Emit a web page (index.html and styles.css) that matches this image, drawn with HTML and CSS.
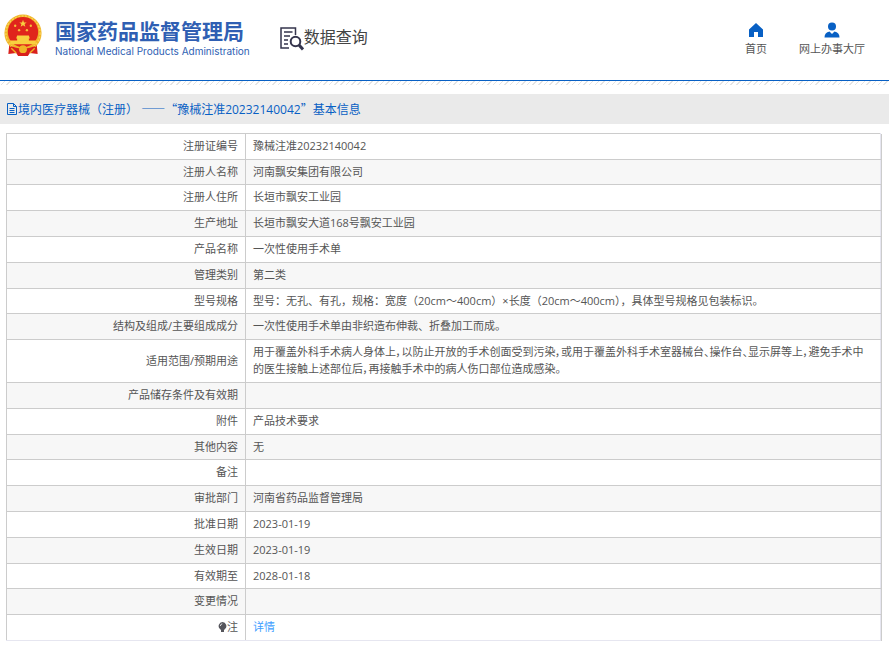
FILE: index.html
```html
<!DOCTYPE html>
<html lang="zh-CN">
<head>
<meta charset="utf-8">
<meta name="viewport" content="width=device-width, initial-scale=1">
<title>国家药品监督管理局 数据查询</title>
<link rel="stylesheet" href="styles.css">
</head>
<body>
<header class="header">
  <div class="brand">
    <svg class="emblem" viewBox="0 0 40 44" aria-hidden="true">
      <path fill="#d9201c" d="M6 31 L34 31 L35 41 L27 40 L25 43 L15 43 L13 40 L5 41Z"/>
      <circle cx="20" cy="19.500" r="19" fill="#f0b428"/>
      <circle cx="20" cy="19.500" r="17.500" fill="none" stroke="#f9d354" stroke-width="1.500" stroke-dasharray="2 1.500"/>
      <circle cx="20" cy="18.500" r="15.500" fill="#e0251c"/>
      <path fill="#f8d040" d="M20 6l1 2.600h2.800l-2.200 1.700.8 2.700-2.400-1.600-2.400 1.600.8-2.700-2.200-1.700H19z"/>
      <g fill="#f5c23a"><circle cx="12" cy="12" r="1.200"/><circle cx="28" cy="12" r="1.200"/><circle cx="16" cy="16.500" r="1.200"/><circle cx="24" cy="16.500" r="1.200"/></g>
      <path fill="#f8d040" d="M14 22h12l1 3h-1v2h7v4H7v-4h7v-2h-1z"/>
      <path fill="#d9201c" d="M8 33q12 5 24 0l1 3q-6 1-7 4H14q-1-3-7-4z"/>
      <circle cx="20" cy="36" r="4" fill="#f0b428"/>
      <path fill="none" stroke="#f0b428" stroke-width="1.500" d="M8 35l5 5M32 35l-5 5"/>
    </svg>
    <div class="brand-text">
      <div class="brand-cn">国家药品监督管理局</div>
      <div class="brand-en">National Medical Products Administration</div>
    </div>
  </div>
  <div class="section-name">
    <svg class="search-doc" viewBox="0 0 24 24" fill="none" stroke="#34344c" aria-hidden="true">
      <path stroke-width="1.500" d="M15.500 8V1H1v20h8"/>
      <path stroke-width="1.500" d="M4 5h8.500M4 9h6M4 13h4M4 17h4"/>
      <circle cx="15.500" cy="14.500" r="4.800" stroke-width="2"/>
      <path stroke-width="3" d="M19 18l4 4.500"/>
    </svg>
    <span>数据查询</span>
  </div>
  <nav class="nav">
    <a href="#home">
      <svg class="nav-icon" viewBox="0 0 16 16" fill="#0860c4" aria-hidden="true"><path d="M8 1l7 6.500V15h-5v-5H6v5H1V7.500z"/></svg>
      <span>首页</span>
    </a>
    <a href="#hall">
      <svg class="nav-icon" viewBox="0 0 16 16" fill="#0860c4" aria-hidden="true"><circle cx="8" cy="4.500" r="4"/><path d="M.5 15.500q0-5 5-6L8 12l2.500-2.500q5 1 5 6z"/></svg>
      <span>网上办事大厅</span>
    </a>
  </nav>
</header>
<div class="hatch"></div>
<main>
  <h1 class="title">
    <svg class="title-icon" viewBox="0 0 12 12" fill="none" stroke="#0860c4" aria-hidden="true"><path d="M1.500.5h6l3 3v8h-9zM7.500.5v3h3M3.500 5.500h5M3.500 7.500h5M3.500 9.500h5"/></svg>
    <span>境内医疗器械（注册） <span class="cjk">——“</span>豫械注准20232140042<span class="cjk">”</span>基本信息</span>
  </h1>
  <table class="info">
    <tbody>
      <tr><th scope="row">注册证编号</th><td>豫械注准20232140042</td></tr>
      <tr><th scope="row">注册人名称</th><td>河南飘安集团有限公司</td></tr>
      <tr><th scope="row">注册人住所</th><td>长垣市飘安工业园</td></tr>
      <tr><th scope="row">生产地址</th><td>长垣市飘安大道168号飘安工业园</td></tr>
      <tr><th scope="row">产品名称</th><td>一次性使用手术单</td></tr>
      <tr><th scope="row">管理类别</th><td>第二类</td></tr>
      <tr><th scope="row">型号规格</th><td>型号：无孔、有孔，规格：宽度（20cm～400cm）×长度（20cm～400cm），具体型号规格见包装标识。</td></tr>
      <tr><th scope="row">结构及组成/主要组成成分</th><td>一次性使用手术单由非织造布伸裁、折叠加工而成。</td></tr>
      <tr><th scope="row">适用范围/预期用途</th><td class="prose">用于覆盖外科手术病人身体上，以防止开放的手术创面受到污染，或用于覆盖外科手术室器械台、操作台、显示屏等上，避免手术中的医生接触上述部位后，再接触手术中的病人伤口部位造成感染。</td></tr>
      <tr><th scope="row">产品储存条件及有效期</th><td></td></tr>
      <tr><th scope="row">附件</th><td>产品技术要求</td></tr>
      <tr><th scope="row">其他内容</th><td>无</td></tr>
      <tr><th scope="row">备注</th><td></td></tr>
      <tr><th scope="row">审批部门</th><td>河南省药品监督管理局</td></tr>
      <tr><th scope="row">批准日期</th><td>2023-01-19</td></tr>
      <tr><th scope="row">生效日期</th><td>2023-01-19</td></tr>
      <tr><th scope="row">有效期至</th><td>2028-01-18</td></tr>
      <tr><th scope="row">变更情况</th><td></td></tr>
      <tr><th scope="row"><svg class="bulb" viewBox="0 0 9 12" aria-hidden="true"><path fill="#55555c" d="M4.500 1a4 4 0 0 1 2.500 7L6 9v2H3V9L2 8a4 4 0 0 1 2.500-7z"/><path fill="none" stroke="#fff" stroke-width=".8" d="M2.300 5q.2-2 2-2.200"/></svg>注</th><td><a class="detail" href="#detail">详情</a></td></tr>
    </tbody>
  </table>
</main>
</body>
</html>
```
FILE: styles.css
```css
* { box-sizing: border-box; }

body {
  margin: 0;
  background: #fff;
  color: #555;
  font: 11px/17px "Open Sans", "Noto Sans CJK SC", sans-serif;
}

.header {
  display: flex;
  align-items: flex-start;
  height: 81px;
  padding: 0 24px 0 3px;
  border-bottom: 1px solid #0860c4;
}

.hatch {
  height: 4px;
  background: repeating-linear-gradient(135deg, #fff 0 3px, #e4e4e4 3px 4px);
}

.brand {
  display: flex;
  align-items: flex-start;
  gap: 12px;
  margin-top: 14px;
}

.emblem { width: 40px; height: 43px; }

.brand-text { color: #2f5fb3; white-space: nowrap; }

.brand-cn {
  margin-top: 4px;
  font-size: 21px;
  line-height: 26px;
  font-weight: 700;
}

.brand-en {
  font: 400 10px/14px Inter, sans-serif;
}

.section-name {
  display: flex;
  align-items: center;
  margin: 23px 0 0 30px;
  font-size: 16px;
  line-height: 26px;
  color: #444;
}

.search-doc { width: 24px; height: 24px; margin-top: 4px; }

.nav {
  display: flex;
  gap: 32px;
  margin: 22px 0 0 auto;
}

.nav a {
  display: flex;
  flex-direction: column;
  align-items: center;
  gap: 2px;
  color: #555;
  text-decoration: none;
}

.nav-icon { width: 16px; height: 16px; }

.title {
  display: flex;
  align-items: center;
  height: 30px;
  margin: 9px 0;
  padding-left: 6px;
  background: #eaeaea;
  color: #0860c4;
  font-size: 12px;
  font-weight: 400;
}

.title .cjk { font-family: "Noto Sans CJK SC", sans-serif; }

.title-icon { width: 12px; height: 12px; }

.info {
  width: calc(100% - 14px);
  margin-left: 6px;
  border-collapse: collapse;
  box-shadow: 1px 1px 0 #ccc;
}

.info th,
.info td {
  height: 26px;
  padding: 3px 7px 5px;
  border: 1px solid #ccc;
  font-weight: 400;
  text-align: left;
}

.info th { width: 239px; text-align: right; }

.info td { border-right-color: #e6e6f0; }

.info tr:last-child > * { border-bottom-color: #e6e6f0; }

.info tr:nth-child(even) { background: #f7f7f7; }

.info tr:nth-child(5n+2) > * { height: 25px; padding-bottom: 4px; }

.info .prose { font-feature-settings: "palt"; }

.bulb { width: 9px; height: 12px; vertical-align: -2px; }

.detail { color: #409eff; text-decoration: none; }
```
